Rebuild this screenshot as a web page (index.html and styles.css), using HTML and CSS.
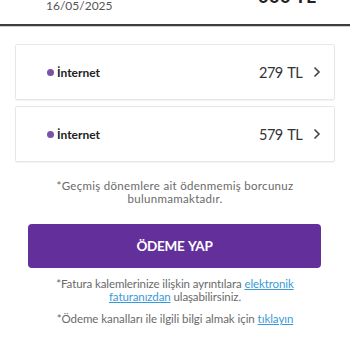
FILE: index.html
```html
<!DOCTYPE html>
<html lang="tr">
<head>
<meta charset="utf-8">
<link rel="stylesheet" href="styles.css">
</head>
<body>
<div class="top">
  <span class="date">16/05/2025</span>
  <span class="amount">000 TL</span>
</div>
<div class="cards">
  <div class="card">
    <span class="label"><span class="dot"></span>İnternet</span>
    <span class="price">279 TL<svg class="chev" viewBox="0 0 8 12" width="8" height="12"><path d="M1.5 1.5 L6 6 L1.5 10.5" fill="none" stroke="#444" stroke-width="1.6"/></svg></span>
  </div>
  <div class="card">
    <span class="label"><span class="dot"></span>İnternet</span>
    <span class="price">579 TL<svg class="chev" viewBox="0 0 8 12" width="8" height="12"><path d="M1.5 1.5 L6 6 L1.5 10.5" fill="none" stroke="#444" stroke-width="1.6"/></svg></span>
  </div>
</div>
<p class="note first">*Geçmiş dönemlere ait ödenmemiş borcunuz<br>bulunmamaktadır.</p>
<button class="pay">ÖDEME YAP</button>
<p class="note info">*Fatura kalemlerinize ilişkin ayrıntılara <a href="#">elektronik<br>faturanızdan</a> ulaşabilirsiniz.</p>
<p class="note info2">*Ödeme kanalları ile ilgili bilgi almak için <a href="#">tıklayın</a></p>
</body>
</html>
```
FILE: styles.css
```css
html, body {
  margin: 0;
  padding: 0;
  background: #fff;
  font-family: Lato, "Open Sans", sans-serif;
  width: 350px;
  overflow: hidden;
}
.top {
  height: 24px;
  border-bottom: 2px solid #3d3d3d;
  display: flex;
  justify-content: space-between;
  align-items: flex-end;
  padding: 0 34px 0 46px;
  box-shadow: 0 1px 0 #cfcfcf;
}
.date {
  font-size: 12px;
  color: #555;
  line-height: 12px;
  margin-bottom: 12px;
}
.amount {
  font-size: 19px;
  font-weight: 700;
  color: #222;
  line-height: 19px;
  margin-bottom: 19px;
}
.cards {
  margin: 18px 15px 0;
  display: flex;
  flex-direction: column;
  gap: 6px;
}
.card {
  height: 54px;
  border: 1px solid #e7e7e7;
  border-radius: 2px;
  box-shadow: 0 1px 1px rgba(0,0,0,0.05);
  display: flex;
  align-items: center;
  justify-content: space-between;
  padding: 0 13px 0 31px;
}
.label {
  display: flex;
  align-items: center;
  font-size: 12px;
  font-weight: 700;
  color: #222;
}
.dot {
  width: 7px;
  height: 7px;
  border-radius: 50%;
  background: #7b52a8;
  margin-right: 3px;
}
.price {
  display: flex;
  align-items: center;
  font-size: 14.5px;
  letter-spacing: -0.6px;
  word-spacing: 2px;
  color: #333;
}
.chev {
  margin-left: 11px;
}
.note {
  text-align: center;
  font-size: 11.5px;
  line-height: 13px;
  color: #6a6a6a;
  margin: 0;
}
.note a {
  color: #3a9ad9;
}
.first {
  margin-top: 17px;
  letter-spacing: 0.3px;
}
.pay {
  display: block;
  margin: 19px 29px 0 28px;
  width: 293px;
  height: 44px;
  border: none;
  border-radius: 4px;
  background: #632f9b;
  color: #fff;
  font-family: Lato, "Open Sans", sans-serif;
  font-size: 13.5px;
  font-weight: 700;
  letter-spacing: -0.3px;
  word-spacing: 1px;
}
.info {
  margin-top: 9px;
  letter-spacing: -0.1px;
}
.info2 {
  margin-top: 9px;
  letter-spacing: -0.05px;
}
```
